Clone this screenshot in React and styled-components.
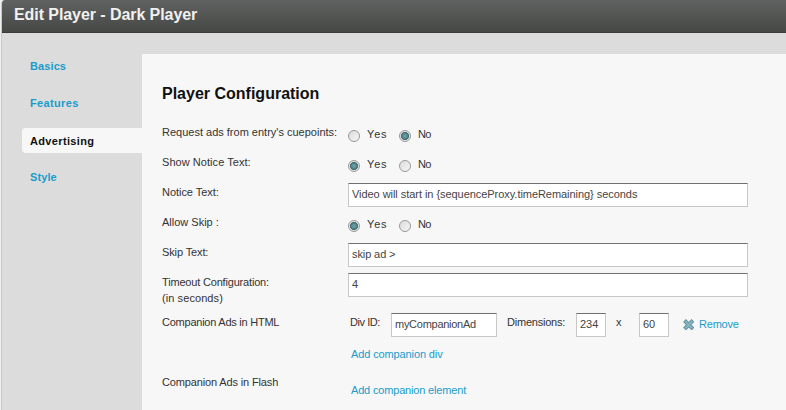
import React from "react";
import styled, { createGlobalStyle } from "styled-components";

const Global = createGlobalStyle`
  * { box-sizing: border-box; }
  body { margin: 0; background: #f0f0f0; overflow: hidden; font: 11px/16px "Liberation Sans", Arial, sans-serif; color: #333; }
`;

const Window = styled.div`
  width: 785px;
  height: 410px;
  margin-left: 1px;
  border-left: 1px solid #c8c8c8;
  border-top-left-radius: 4px;
  background: #dcdcdc;
  overflow: hidden;
  display: flex;
  flex-direction: column;
`;

const Header = styled.header`
  flex: none;
  height: 33px;
  padding: 5px 0 0 12px;
  background: linear-gradient(#606261, #464846);
  border-bottom: 1px solid #393b3a;
  color: #f1f1ef;
  font-size: 16px;
  font-weight: bold;
  line-height: 19px;
  letter-spacing: -0.07px;
`;

const Body = styled.div`
  flex: 1;
  display: flex;
`;

const Nav = styled.nav`
  width: 140px;
  padding: 21px 0 0 20px;
  display: flex;
  flex-direction: column;
  gap: 12px;
`;

const NavItem = styled.a`
  height: 25px;
  padding-left: 8px;
  line-height: ${(p) => (p.$active ? 26 : 25)}px;
  border-radius: 4px 0 0 4px;
  font-weight: bold;
  color: ${(p) => (p.$active ? "#111" : "#189ccb")};
  background: ${(p) => (p.$active ? "#f7f7f7" : "transparent")};
  letter-spacing: ${(p) => p.$spacing}px;
`;

const Panel = styled.main`
  flex: 1;
  margin-top: 21px;
  padding: 30px 0 0 20px;
  background: #f7f7f7;
`;

const Title = styled.h1`
  margin: 0;
  height: 39px;
  font-size: 16px;
  line-height: 20px;
  color: #111;
`;

const Row = styled.div`
  display: flex;
  height: ${(p) => p.$height || 30}px;
`;

const Label = styled.div`
  width: 186px;
  padding-top: 1px;
  letter-spacing: ${(p) => p.$spacing || 0}px;
`;

const Note = styled.div`
  letter-spacing: 0.08px;
`;

const Options = styled.div`
  display: flex;
  align-items: flex-start;
`;

const Option = styled.label`
  display: flex;
  width: 51px;
`;

const Radio = styled.span`
  width: 12px;
  height: 12px;
  margin: 7px 7px 0 0;
  border: 1px solid #999;
  border-radius: 50%;
  background: ${(p) =>
    p.$on
      ? "radial-gradient(circle at 50% 50%, #72a9ae 0, #4f858c 2.6px, #41666b 3.7px, #e8e8e8 4.4px)"
      : "linear-gradient(135deg, #dcdcdc, #f6f6f6)"};
`;

const Caption = styled.span`
  padding-top: ${(p) => p.$top ?? 3}px;
  width: ${(p) => (p.$width ? `${p.$width}px` : "auto")};
  letter-spacing: ${(p) => p.$spacing || 0}px;
  white-space: nowrap;
`;

const Field = styled.input`
  width: ${(p) => p.$width || 400}px;
  height: 24px;
  margin: 0 ${(p) => p.$after || 0}px 0 0;
  padding: 0 3px 2px;
  border: 1px solid #c7c7c7;
  border-top-color: #707070;
  border-radius: 0;
  background: #fff;
  color: #444;
  font: inherit;
  letter-spacing: ${(p) => p.$spacing || 0}px;
  outline: none;
`;

const Stack = styled.div`
  display: flex;
  flex-direction: column;
`;

const Line = styled.div`
  display: flex;
  padding-left: 2px;
  height: 33px;
`;

const Link = styled.a`
  color: #189ccb;
  padding: ${(p) => p.$pad || "0"};
  letter-spacing: ${(p) => p.$spacing || 0}px;
`;

const RemoveIcon = styled.svg`
  width: 11px;
  height: 11px;
  margin: 6px 4px 0 0;
`;

function YesNo({ value }) {
  return (
    <Options>
      {["Yes", "No"].map((text) => (
        <Option key={text}>
          <Radio $on={text === value} />
          <Caption $spacing={text === "Yes" ? 0.8 : -0.7}>{text}</Caption>
        </Option>
      ))}
    </Options>
  );
}

export default function App() {
  return (
    <>
      <Global />
      <Window>
        <Header>Edit Player - Dark Player</Header>
        <Body>
          <Nav>
            <NavItem $spacing={0.1}>Basics</NavItem>
            <NavItem $spacing={0.35}>Features</NavItem>
            <NavItem $active $spacing={0.35}>Advertising</NavItem>
            <NavItem $spacing={0.1}>Style</NavItem>
          </Nav>
          <Panel>
            <Title>Player Configuration</Title>
            <Row><Label>Request ads from entry's cuepoints:</Label><YesNo value="No" /></Row>
            <Row><Label $spacing={0.05}>Show Notice Text:</Label><YesNo value="Yes" /></Row>
            <Row><Label $spacing={-0.04}>Notice Text:</Label><Field $spacing={-0.05} defaultValue="Video will start in {sequenceProxy.timeRemaining} seconds" /></Row>
            <Row><Label>Allow Skip :</Label><YesNo value="Yes" /></Row>
            <Row><Label $spacing={-0.12}>Skip Text:</Label><Field $spacing={-0.1} defaultValue="skip ad >" /></Row>
            <Row $height={40}>
              <Label $spacing={-0.18}>
                Timeout Configuration:
                <Note>(in seconds)</Note>
              </Label>
              <Field defaultValue="4" />
            </Row>
            <Row $height={60}>
              <Label $spacing={-0.24}>Companion Ads in HTML</Label>
              <Stack>
                <Line>
                  <Caption $top={1} $width={41} $spacing={-0.45}>Div ID:</Caption>
                  <Field $width={106} $after={10} $spacing={-0.27} defaultValue="myCompanionAd" />
                  <Caption $top={1} $width={69} $spacing={-0.22}>Dimensions:</Caption>
                  <Field $width={30} $after={10} defaultValue="234" />
                  <Caption $top={1} $width={23}>x</Caption>
                  <Field $width={30} $after={14} defaultValue="60" />
                  <RemoveIcon viewBox="0 0 11 11">
                    <path d="M2.9 2.9 8.6 8.6M8.6 2.9 2.9 8.6" stroke="#5f8f9e" strokeWidth="4" strokeLinecap="square" />
                    <path d="M2.9 2.9 8.6 8.6M8.6 2.9 2.9 8.6" stroke="#86b3c0" strokeWidth="2.2" strokeLinecap="square" />
                  </RemoveIcon>
                  <Link $pad="3px 0 0 1px" $spacing={-0.2}>Remove</Link>
                </Line>
                <Link $pad="0 0 0 3px" $spacing={-0.12}>Add companion div</Link>
              </Stack>
            </Row>
            <Row><Label $spacing={-0.14}>Companion Ads in Flash</Label><Link $pad="9px 0 0 3px" $spacing={-0.17}>Add companion element</Link></Row>
          </Panel>
        </Body>
      </Window>
    </>
  );
}
